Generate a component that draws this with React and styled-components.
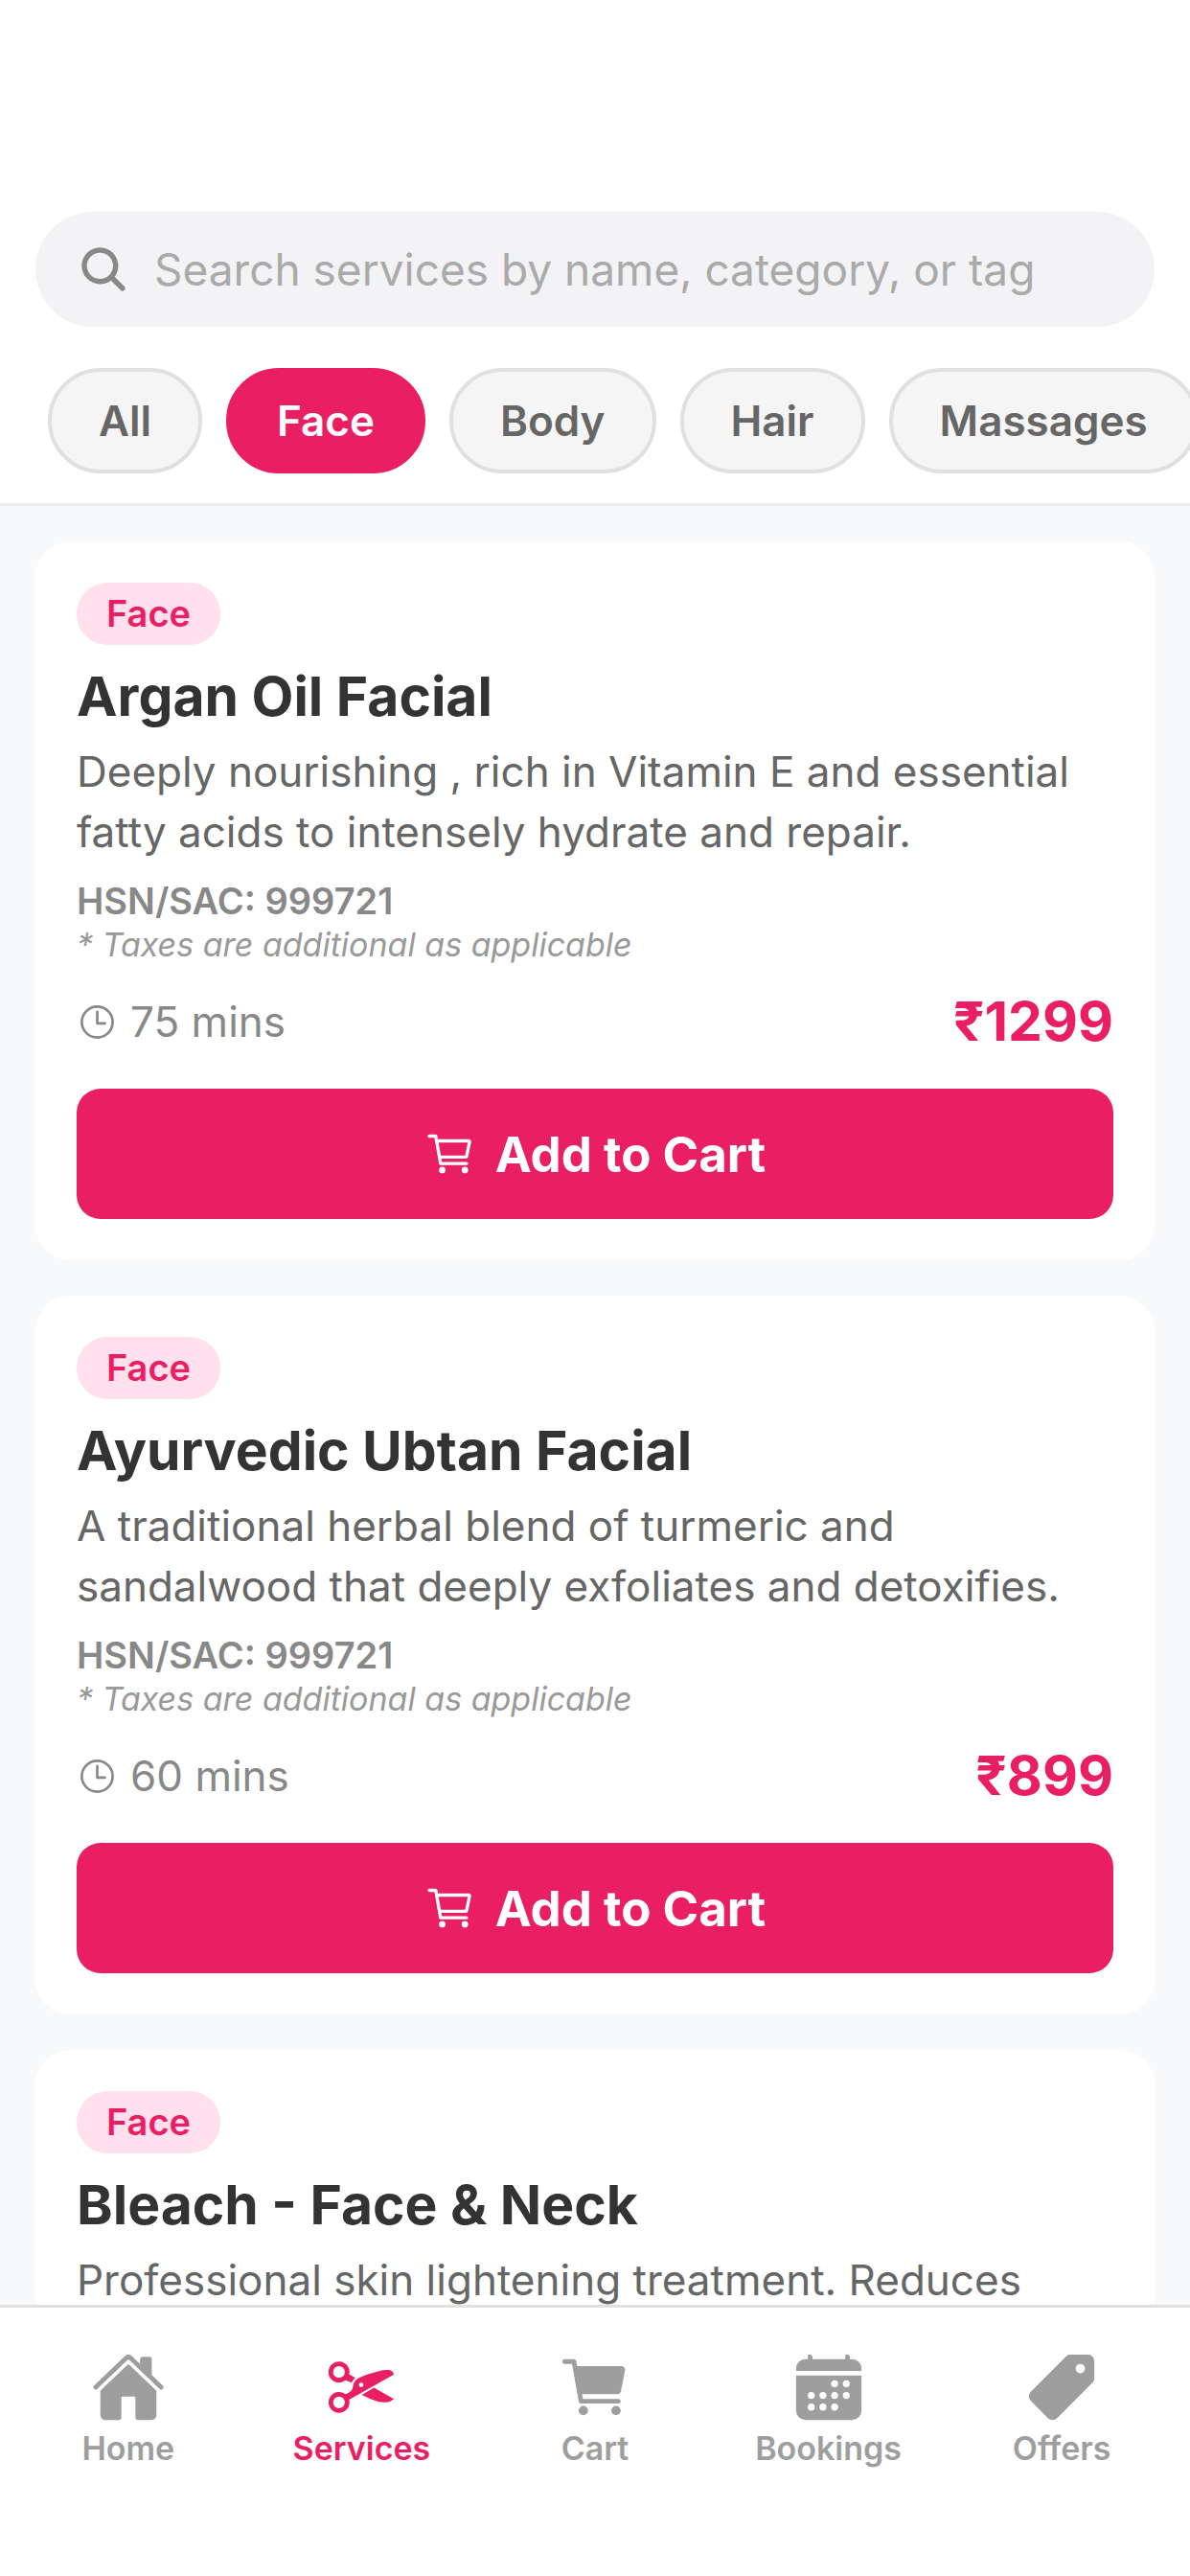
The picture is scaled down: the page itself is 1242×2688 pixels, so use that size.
import React, { useState } from 'react';
import styled, { createGlobalStyle } from 'styled-components';
import {
  IoCalendar,
  IoCart,
  IoCartOutline,
  IoCut,
  IoHome,
  IoPricetag,
  IoSearch,
  IoTimeOutline,
} from 'react-icons/io5';

const GlobalStyle = createGlobalStyle`
  * {
    box-sizing: border-box;
  }

  body {
    margin: 0;
    background: #f8f9fb;
    font-family: Inter, "Liberation Sans", sans-serif;
  }

  button, input {
    font-family: inherit;
  }
`;

// Styled Components
const Screen = styled.div`
  display: flex;
  flex-direction: column;
  height: 100vh;
`;

const Header = styled.header`
  padding: 221px 0 31px;
  background: #fff;
  border-bottom: 3px solid #eee;
`;

const SearchBox = styled.label`
  display: flex;
  align-items: center;
  gap: 25px;
  height: 120px;
  margin: 0 37px 43px;
  padding: 0 43px;
  border-radius: 60px;
  background: #f3f3f6;
  color: #888;

  svg {
    flex: none;
  }
`;

const SearchInput = styled.input`
  flex: 1;
  min-width: 0;
  padding: 0;
  border: none;
  outline: none;
  background: transparent;
  color: #333;
  font-size: 46px;

  &::placeholder {
    color: #aaa;
    opacity: 1;
  }
`;

const Chips = styled.div`
  display: flex;
  gap: 25px;
  padding: 0 50px;
  overflow-x: auto;
  scrollbar-width: none;
`;

const Chip = styled.button`
  flex: none;
  height: 110px;
  padding: 0 49px;
  border: 4px solid ${(props) => (props.$active ? '#e91e63' : '#e0e0e0')};
  border-radius: 55px;
  background: ${(props) => (props.$active ? '#e91e63' : '#f5f5f5')};
  color: ${(props) => (props.$active ? '#fff' : '#666')};
  font-size: 44px;
  font-weight: 600;
  cursor: pointer;
`;

const List = styled.main`
  flex: 1;
  min-height: 0;
  display: flex;
  flex-direction: column;
  gap: 37px;
  padding: 37px;
  overflow-y: auto;
  scrollbar-width: none;
`;

const Card = styled.article`
  flex: none;
  padding: 43px;
  border-radius: 37px;
  background: #fff;
`;

const Badge = styled.span`
  display: block;
  width: fit-content;
  padding: 0 31px;
  border-radius: 32px;
  background: #ffe0ec;
  color: #e91e63;
  font-size: 38px;
  font-weight: 600;
  line-height: 65px;
`;

const Name = styled.h2`
  margin: 19px 0 12px;
  color: #333;
  font-size: 57px;
  font-weight: 700;
  line-height: 70px;
`;

const Description = styled.p`
  margin: 0 0 17px;
  color: #666;
  font-size: 44px;
  line-height: 63px;
`;

const Code = styled.p`
  margin: 0;
  color: #888;
  font-size: 38px;
  font-weight: 600;
  line-height: 47px;
`;

const TaxNote = styled.p`
  margin: 0 0 26px;
  color: #999;
  font-size: 34px;
  font-style: italic;
  line-height: 44px;
`;

const MetaRow = styled.div`
  display: flex;
  align-items: center;
  justify-content: space-between;
  margin-bottom: 38px;
`;

const Duration = styled.span`
  display: flex;
  align-items: center;
  gap: 13px;
  color: #888;
  font-size: 44px;
`;

const Price = styled.span`
  color: #e91e63;
  font-size: 57px;
  font-weight: 700;
  line-height: 64px;
`;

const CartButton = styled.button`
  display: flex;
  align-items: center;
  justify-content: center;
  gap: 20px;
  width: 100%;
  height: 136px;
  padding: 0;
  border: none;
  border-radius: 25px;
  background: #e91e63;
  color: #fff;
  font-size: 51px;
  font-weight: 700;
  cursor: pointer;
`;

const TabBar = styled.nav`
  display: flex;
  padding: 44px 12px 111px;
  border-top: 3px solid #e0e0e0;
  background: #fff;
`;

const Tab = styled.a`
  flex: 1;
  display: flex;
  flex-direction: column;
  align-items: center;
  gap: 3px;
  color: ${(props) => (props.$active ? '#e91e63' : '#9e9e9e')};
  font-size: 34px;
  font-weight: 600;
  line-height: 44px;
  text-decoration: none;
`;

const categories = ['All', 'Face', 'Body', 'Hair', 'Massages'];

const services = [
  {
    id: 1,
    category: 'Face',
    name: 'Argan Oil Facial',
    description: 'Deeply nourishing , rich in Vitamin E and essential fatty acids to intensely hydrate and repair.',
    code: '999721',
    mins: 75,
    price: 1299,
  },
  {
    id: 2,
    category: 'Face',
    name: 'Ayurvedic Ubtan Facial',
    description: 'A traditional herbal blend of turmeric and sandalwood that deeply exfoliates and detoxifies.',
    code: '999721',
    mins: 60,
    price: 899,
  },
  {
    id: 3,
    category: 'Face',
    name: 'Bleach - Face & Neck',
    description: 'Professional skin lightening treatment. Reduces',
  },
];

const tabs = [
  { label: 'Home', Icon: IoHome },
  { label: 'Services', Icon: IoCut },
  { label: 'Cart', Icon: IoCart },
  { label: 'Bookings', Icon: IoCalendar },
  { label: 'Offers', Icon: IoPricetag },
];

const ServiceCard = ({ service }) => (
  <Card>
    <Badge>{service.category}</Badge>
    <Name>{service.name}</Name>
    <Description>{service.description}</Description>
    {service.price && (
      <>
        <Code>HSN/SAC: {service.code}</Code>
        <TaxNote>* Taxes are additional as applicable</TaxNote>
        <MetaRow>
          <Duration>
            <IoTimeOutline size={43} />
            {service.mins} mins
          </Duration>
          <Price>₹{service.price}</Price>
        </MetaRow>
        <CartButton type="button">
          <IoCartOutline size={54} />
          Add to Cart
        </CartButton>
      </>
    )}
  </Card>
);

const App = () => {
  const [search, setSearch] = useState('');
  const [category, setCategory] = useState('Face');

  const visible = services.filter(
    (service) =>
      (category === 'All' || service.category === category) &&
      service.name.toLowerCase().includes(search.toLowerCase())
  );

  return (
    <Screen>
      <GlobalStyle />
      <Header>
        <SearchBox>
          <IoSearch size={56} />
          <SearchInput
            type="text"
            aria-label="Search services"
            placeholder="Search services by name, category, or tag"
            value={search}
            onChange={(e) => setSearch(e.target.value)}
          />
        </SearchBox>
        <Chips>
          {categories.map((item) => (
            <Chip key={item} type="button" $active={item === category} onClick={() => setCategory(item)}>
              {item}
            </Chip>
          ))}
        </Chips>
      </Header>
      <List>
        {visible.map((service) => (
          <ServiceCard key={service.id} service={service} />
        ))}
      </List>
      <TabBar>
        {tabs.map(({ label, Icon }) => (
          <Tab key={label} href="#" $active={label === 'Services'}>
            <Icon size={78} />
            {label}
          </Tab>
        ))}
      </TabBar>
    </Screen>
  );
};

export default App;
